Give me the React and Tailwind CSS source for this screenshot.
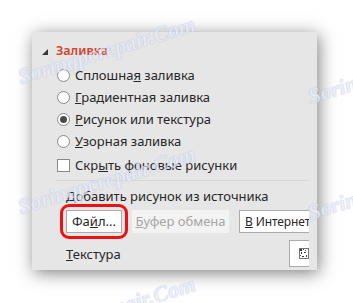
import React from "react";

const font = { fontFamily: '"Noto Sans", "Open Sans", sans-serif' };

function Radio({ checked, children }) {
  return (
    <div className="flex items-center h-[22px]">
      <div className="w-[13px] h-[13px] rounded-full border border-[#8a8a8a] bg-white flex items-center justify-center shrink-0">
        {checked && <div className="w-[7px] h-[7px] rounded-full bg-[#4a4a4a]" />}
      </div>
      <span className="ml-[5px] text-[13px] text-[#262626] leading-none">{children}</span>
    </div>
  );
}

function Mark({ className }) {
  return (
    <div
      aria-hidden="true"
      className={"absolute pointer-events-none whitespace-nowrap italic font-bold text-[22px] leading-none text-[#e6e9f7] opacity-75 origin-bottom-left -rotate-[17deg] " + className}
      style={{ fontFamily: '"Liberation Serif", serif', textShadow: "0 0 1px #8fa0d0" }}
    >
      Soringpcrepair.Com
    </div>
  );
}

export default function App() {
  return (
    <div className="w-[353px] h-[303px] bg-white overflow-hidden relative" style={font}>
      <div className="ml-[32px] mt-[32px] w-[285px] h-[238px] bg-[#e6e6e6] shadow-[2px_3px_16px_rgba(0,0,0,0.5)] overflow-hidden">
        <div className="w-[277px] h-full overflow-hidden">
          <div className="flex items-center pl-[10px] pt-[9px] h-[29px]">
            <svg width="6" height="6" viewBox="0 0 6 6" className="mt-[1px]">
              <polygon points="6,0 6,6 0,6" fill="#3a3a3a" />
            </svg>
            <span className="ml-[8px] text-[12.5px] font-semibold text-[#d2432a] leading-none">Заливка</span>
          </div>
          <div className="pl-[25px] mt-[3px]">
            <Radio>Сплошна<u>я</u> заливка</Radio>
            <Radio><u>Г</u>радиентная заливка</Radio>
            <Radio checked><u>Р</u>исунок или текстура</Radio>
            <Radio><u>У</u>зорная заливка</Radio>
            <div className="flex items-center h-[24px] mt-[1px]">
              <div className="w-[13px] h-[13px] border border-[#8a8a8a] bg-white shrink-0" />
              <span className="ml-[5px] text-[13px] text-[#262626] leading-none">Скр<u>ы</u>ть фоновые рисунки</span>
            </div>
          </div>
          <div className="ml-[24px] mt-[3px] h-px bg-[#d8d8d8]" />
          <div className="pl-[34px] mt-[9px] text-[13px] text-[#262626] leading-none">Добавить рисунок из источника</div>
          <div className="flex pl-[34px] mt-[7px] gap-[10px] items-center">
            <div className="relative shrink-0">
              <div className="w-[56px] h-[23px] border border-[#ababab] bg-white flex items-center justify-center text-[13px] text-[#262626]">Фа<u>й</u>л...</div>
              <div className="absolute -left-[6px] -top-[6px] w-[68px] h-[35px] border-[3px] border-[#ee1111] rounded-[9px]" />
            </div>
            <div className="w-[97px] h-[23px] bg-[#f3f3f3] flex items-center justify-center text-[13px] text-[#a6a6a6] shrink-0"><u>Б</u>уфер обмена</div>
            <div className="w-[72px] h-[23px] border border-r-0 border-[#ababab] bg-white flex items-center pl-[5px] text-[12px] tracking-[-0.1px] text-[#262626] whitespace-nowrap shrink-0"><u>В</u>&nbsp;Интернет</div>
          </div>
          <div className="flex items-start pl-[34px] mt-[7px]">
            <span className="mt-[8px] text-[13px] text-[#262626] leading-none"><u>Т</u>екстура</span>
            <div className="ml-auto w-[21px] h-[27px] border border-r-0 border-[#ababab] bg-white flex items-center pl-[9px] shrink-0 -mr-[1px]">
              <svg width="10" height="11" viewBox="0 0 10 11">
                <rect x="0.5" y="0.5" width="9" height="10" fill="#ffffff" stroke="#777" strokeWidth="1" />
                <rect x="1" y="1" width="2" height="2" fill="#333" />
                <rect x="4" y="1" width="1" height="1" fill="#555" />
                <rect x="6" y="2" width="1" height="1" fill="#555" />
                <rect x="2" y="4" width="1" height="2" fill="#333" />
                <rect x="5" y="4" width="2" height="1" fill="#444" />
                <rect x="1" y="7" width="1" height="1" fill="#555" />
                <rect x="3" y="8" width="2" height="1" fill="#333" />
                <rect x="7" y="7" width="1" height="2" fill="#444" />
              </svg>
            </div>
          </div>
        </div>
      </div>
      <Mark className="left-[22px] top-[66px]" />
      <Mark className="left-[22px] top-[196px]" />
      <Mark className="left-[22px] top-[326px]" />
      <Mark className="left-[312px] top-[86px]" />
      <Mark className="left-[312px] top-[202px]" />
    </div>
  );
}
